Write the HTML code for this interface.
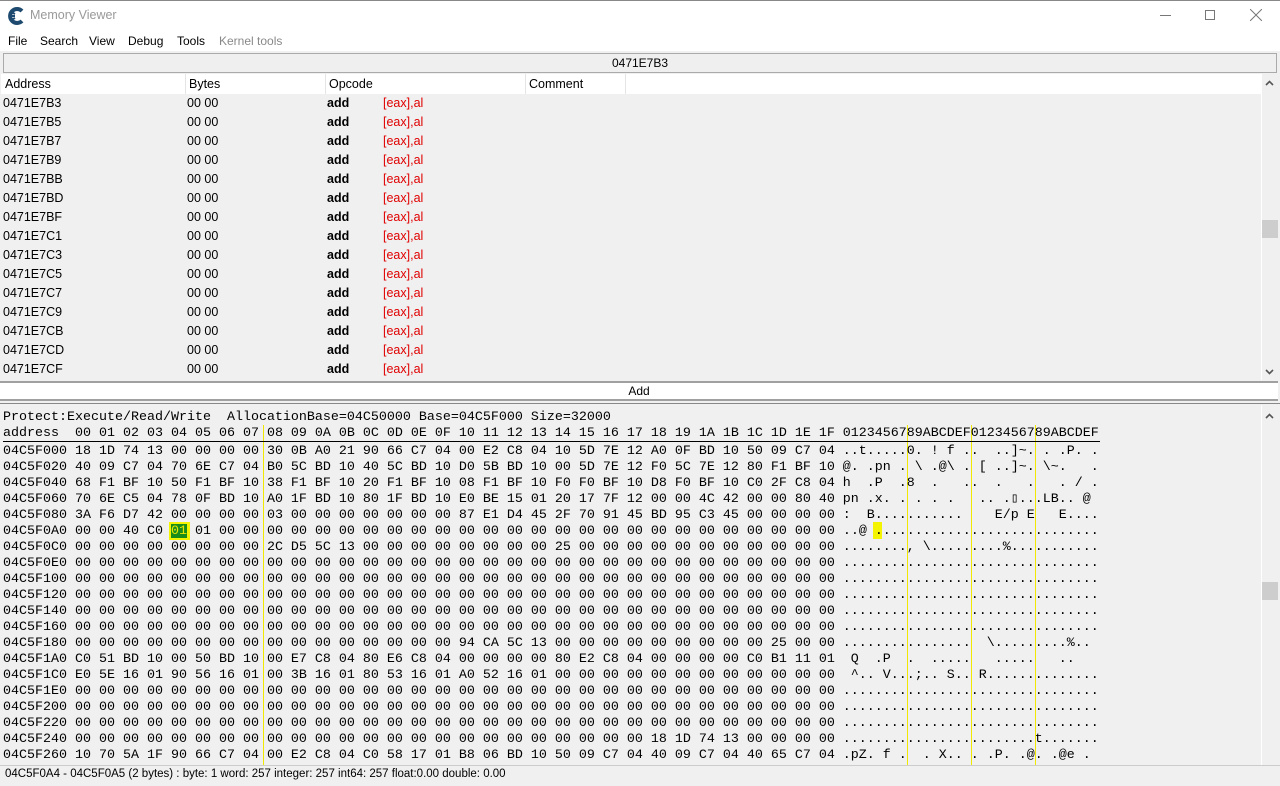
<!DOCTYPE html>
<html><head><style>
*{margin:0;padding:0;box-sizing:border-box}
body{width:1280px;height:786px;background:#f0f0f0;position:relative;overflow:hidden;font-family:"Liberation Sans",sans-serif;font-size:12px;color:#000}
.a{position:absolute}
.m{font-family:"Liberation Mono",monospace;font-size:13.33px;white-space:pre;line-height:16px}
.r{position:absolute;left:0;height:19px;line-height:19px;white-space:pre;font-size:12.5px}
.r span{position:absolute}
.red{color:#e00000}
</style></head><body>
<!-- title bar -->
<div class="a" style="left:0;top:0;width:1280px;height:31px;background:#fff;border-top:1px solid #888"></div>
<svg class="a" style="left:8px;top:7px" width="18" height="18" viewBox="0 0 18 18"><path d="M14 4 A7 7 0 1 0 14 14" stroke="#1d4a6e" stroke-width="4" fill="none"/><path d="M2 9h5M3 5l4 2M3 13l4-2" stroke="#1d4a6e" stroke-width="2"/></svg>
<div class="a" style="left:30px;top:8px;font-size:12.5px;color:#999">Memory Viewer</div>
<div class="a" style="left:1160px;top:15px;width:11px;height:1px;background:#777"></div>
<div class="a" style="left:1205px;top:10px;width:10px;height:10px;border:1px solid #777"></div>
<svg class="a" style="left:1250px;top:9px" width="12" height="12"><path d="M0 0L12 12M12 0L0 12" stroke="#777" stroke-width="1"/></svg>
<!-- menu -->
<div class="a" style="left:0;top:31px;width:1280px;height:20px;background:#fff"></div>
<div class="a" style="left:8px;top:34px">File</div>
<div class="a" style="left:40px;top:34px">Search</div>
<div class="a" style="left:89px;top:34px">View</div>
<div class="a" style="left:128px;top:34px">Debug</div>
<div class="a" style="left:177px;top:34px">Tools</div>
<div class="a" style="left:219px;top:34px;color:#888">Kernel tools</div>
<!-- address bar -->
<div class="a" style="left:3px;top:53px;width:1274px;height:20px;background:#efefef;border:1px solid #aaa;text-align:center;line-height:18px">0471E7B3</div>
<!-- disasm -->
<div class="a" style="left:1px;top:74px;width:1260px;height:20px;background:#fff"></div>
<div class="a" style="left:185px;top:74px;width:1px;height:20px;background:#e5e5e5"></div>
<div class="a" style="left:325px;top:74px;width:1px;height:20px;background:#e5e5e5"></div>
<div class="a" style="left:525px;top:74px;width:1px;height:20px;background:#e5e5e5"></div>
<div class="a" style="left:625px;top:74px;width:1px;height:20px;background:#e5e5e5"></div>
<div class="a" style="left:5px;top:77px;font-size:12.5px">Address</div>
<div class="a" style="left:189px;top:77px;font-size:12.5px">Bytes</div>
<div class="a" style="left:329px;top:77px;font-size:12.5px">Opcode</div>
<div class="a" style="left:529px;top:77px;font-size:12.5px">Comment</div>
<div class="a" style="left:1261px;top:74px;width:17px;height:306px;background:#f0f0f0;border-left:1px solid #fff"></div>
<svg class="a" style="left:1265px;top:80px" width="9" height="6"><path d="M1 5L4.5 1.5L8 5" stroke="#555" stroke-width="1.6" fill="none"/></svg>
<svg class="a" style="left:1265px;top:369px" width="9" height="6"><path d="M1 1L4.5 4.5L8 1" stroke="#555" stroke-width="1.6" fill="none"/></svg>
<div class="a" style="left:1262px;top:220px;width:16px;height:18px;background:#cdcdcd"></div>
<div class="a" style="left:0;top:94px;width:1260px;height:286px">
<div class="r" style="top:0"><span style="left:3px">0471E7B3</span><span style="left:187px">00 00</span><b style="position:absolute;left:327px">add</b><span class="red" style="left:383px">[eax],al</span></div>
<div class="r" style="top:19px"><span style="left:3px">0471E7B5</span><span style="left:187px">00 00</span><b style="position:absolute;left:327px">add</b><span class="red" style="left:383px">[eax],al</span></div>
<div class="r" style="top:38px"><span style="left:3px">0471E7B7</span><span style="left:187px">00 00</span><b style="position:absolute;left:327px">add</b><span class="red" style="left:383px">[eax],al</span></div>
<div class="r" style="top:57px"><span style="left:3px">0471E7B9</span><span style="left:187px">00 00</span><b style="position:absolute;left:327px">add</b><span class="red" style="left:383px">[eax],al</span></div>
<div class="r" style="top:76px"><span style="left:3px">0471E7BB</span><span style="left:187px">00 00</span><b style="position:absolute;left:327px">add</b><span class="red" style="left:383px">[eax],al</span></div>
<div class="r" style="top:95px"><span style="left:3px">0471E7BD</span><span style="left:187px">00 00</span><b style="position:absolute;left:327px">add</b><span class="red" style="left:383px">[eax],al</span></div>
<div class="r" style="top:114px"><span style="left:3px">0471E7BF</span><span style="left:187px">00 00</span><b style="position:absolute;left:327px">add</b><span class="red" style="left:383px">[eax],al</span></div>
<div class="r" style="top:133px"><span style="left:3px">0471E7C1</span><span style="left:187px">00 00</span><b style="position:absolute;left:327px">add</b><span class="red" style="left:383px">[eax],al</span></div>
<div class="r" style="top:152px"><span style="left:3px">0471E7C3</span><span style="left:187px">00 00</span><b style="position:absolute;left:327px">add</b><span class="red" style="left:383px">[eax],al</span></div>
<div class="r" style="top:171px"><span style="left:3px">0471E7C5</span><span style="left:187px">00 00</span><b style="position:absolute;left:327px">add</b><span class="red" style="left:383px">[eax],al</span></div>
<div class="r" style="top:190px"><span style="left:3px">0471E7C7</span><span style="left:187px">00 00</span><b style="position:absolute;left:327px">add</b><span class="red" style="left:383px">[eax],al</span></div>
<div class="r" style="top:209px"><span style="left:3px">0471E7C9</span><span style="left:187px">00 00</span><b style="position:absolute;left:327px">add</b><span class="red" style="left:383px">[eax],al</span></div>
<div class="r" style="top:228px"><span style="left:3px">0471E7CB</span><span style="left:187px">00 00</span><b style="position:absolute;left:327px">add</b><span class="red" style="left:383px">[eax],al</span></div>
<div class="r" style="top:247px"><span style="left:3px">0471E7CD</span><span style="left:187px">00 00</span><b style="position:absolute;left:327px">add</b><span class="red" style="left:383px">[eax],al</span></div>
<div class="r" style="top:266px"><span style="left:3px">0471E7CF</span><span style="left:187px">00 00</span><b style="position:absolute;left:327px">add</b><span class="red" style="left:383px">[eax],al</span></div>
</div>
<!-- Add bar -->
<div class="a" style="left:0;top:381px;width:1278px;height:20px;background:#fff;border-top:2px solid #a0a0a0;border-bottom:2px solid #a0a0a0;text-align:center;line-height:17px">Add</div>
<div class="a" style="left:0;top:403px;width:1280px;height:1px;background:#888"></div>
<!-- hex -->
<div class="a" style="left:0;top:405px;width:1261px;height:361px;background:#f0f0f0"></div>
<div class="a" style="left:1261px;top:405px;width:17px;height:361px;background:#f0f0f0;border-left:1px solid #fff"></div>
<svg class="a" style="left:1265px;top:413px" width="9" height="6"><path d="M1 5L4.5 1.5L8 5" stroke="#555" stroke-width="1.6" fill="none"/></svg>
<div class="a" style="left:1262px;top:582px;width:16px;height:18px;background:#cdcdcd"></div>
<div class="a" style="left:263px;top:425px;width:1px;height:340px;background:#f0e800"></div>
<div class="a" style="left:907px;top:425px;width:1px;height:340px;background:#f0e800"></div>
<div class="a" style="left:971px;top:425px;width:1px;height:340px;background:#f0e800"></div>
<div class="a" style="left:1035px;top:425px;width:1px;height:340px;background:#f0e800"></div>
<div class="a" style="left:3px;top:441px;width:1097px;height:1px;background:#000"></div>
<div class="a" style="left:169px;top:522px;width:21px;height:18px;background:#f4f400"></div>
<div class="a" style="left:171px;top:524px;width:16px;height:14px;background:#1a8c1a"></div>
<div class="a" style="left:873px;top:522px;width:9px;height:17px;background:#f4f400"></div>
<div class="a m" style="left:3px;top:410px">Protect:Execute/Read/Write  AllocationBase=04C50000 Base=04C5F000 Size=32000
address  00 01 02 03 04 05 06 07 08 09 0A 0B 0C 0D 0E 0F 10 11 12 13 14 15 16 17 18 19 1A 1B 1C 1D 1E 1F 0123456789ABCDEF0123456789ABCDEF</div>
<div class="a m" style="left:3px;top:444px">04C5F000 18 1D 74 13 00 00 00 00 30 0B A0 21 90 66 C7 04 00 E2 C8 04 10 5D 7E 12 A0 0F BD 10 50 09 C7 04 ..t.....0. ! f ..  ..]~. . .P. .
04C5F020 40 09 C7 04 70 6E C7 04 B0 5C BD 10 40 5C BD 10 D0 5B BD 10 00 5D 7E 12 F0 5C 7E 12 80 F1 BF 10 @. .pn . \ .@\ . [ ..]~. \~.   .
04C5F040 68 F1 BF 10 50 F1 BF 10 38 F1 BF 10 20 F1 BF 10 08 F1 BF 10 F0 F0 BF 10 D8 F0 BF 10 C0 2F C8 04 h  .P  .8  .   ..  .   .   . / .
04C5F060 70 6E C5 04 78 0F BD 10 A0 1F BD 10 80 1F BD 10 E0 BE 15 01 20 17 7F 12 00 00 4C 42 00 00 80 40 pn .x. . . . .   .. .▯...LB.. @
04C5F080 3A F6 D7 42 00 00 00 00 03 00 00 00 00 00 00 00 87 E1 D4 45 2F 70 91 45 BD 95 C3 45 00 00 00 00 :  B...........    E/p E   E....
04C5F0A0 00 00 40 C0 <span style="color:#e8e800">01</span> 01 00 00 00 00 00 00 00 00 00 00 00 00 00 00 00 00 00 00 00 00 00 00 00 00 00 00 ..@ ............................
04C5F0C0 00 00 00 00 00 00 00 00 2C D5 5C 13 00 00 00 00 00 00 00 00 25 00 00 00 00 00 00 00 00 00 00 00 ........, \.........%...........
04C5F0E0 00 00 00 00 00 00 00 00 00 00 00 00 00 00 00 00 00 00 00 00 00 00 00 00 00 00 00 00 00 00 00 00 ................................
04C5F100 00 00 00 00 00 00 00 00 00 00 00 00 00 00 00 00 00 00 00 00 00 00 00 00 00 00 00 00 00 00 00 00 ................................
04C5F120 00 00 00 00 00 00 00 00 00 00 00 00 00 00 00 00 00 00 00 00 00 00 00 00 00 00 00 00 00 00 00 00 ................................
04C5F140 00 00 00 00 00 00 00 00 00 00 00 00 00 00 00 00 00 00 00 00 00 00 00 00 00 00 00 00 00 00 00 00 ................................
04C5F160 00 00 00 00 00 00 00 00 00 00 00 00 00 00 00 00 00 00 00 00 00 00 00 00 00 00 00 00 00 00 00 00 ................................
04C5F180 00 00 00 00 00 00 00 00 00 00 00 00 00 00 00 00 94 CA 5C 13 00 00 00 00 00 00 00 00 00 25 00 00 ................  \.........%..
04C5F1A0 C0 51 BD 10 00 50 BD 10 00 E7 C8 04 80 E6 C8 04 00 00 00 00 80 E2 C8 04 00 00 00 00 C0 B1 11 01  Q  .P  .  .....   .....   ..
04C5F1C0 E0 5E 16 01 90 56 16 01 00 3B 16 01 80 53 16 01 A0 52 16 01 00 00 00 00 00 00 00 00 00 00 00 00  ^.. V...;.. S.. R..............
04C5F1E0 00 00 00 00 00 00 00 00 00 00 00 00 00 00 00 00 00 00 00 00 00 00 00 00 00 00 00 00 00 00 00 00 ................................
04C5F200 00 00 00 00 00 00 00 00 00 00 00 00 00 00 00 00 00 00 00 00 00 00 00 00 00 00 00 00 00 00 00 00 ................................
04C5F220 00 00 00 00 00 00 00 00 00 00 00 00 00 00 00 00 00 00 00 00 00 00 00 00 00 00 00 00 00 00 00 00 ................................
04C5F240 00 00 00 00 00 00 00 00 00 00 00 00 00 00 00 00 00 00 00 00 00 00 00 00 18 1D 74 13 00 00 00 00 ........................t.......
04C5F260 10 70 5A 1F 90 66 C7 04 00 E2 C8 04 C0 58 17 01 B8 06 BD 10 50 09 C7 04 40 09 C7 04 40 65 C7 04 .pZ. f .  . X.. . .P. .@. .@e .</div>
<div class="a" style="left:0;top:765px;width:1280px;height:1px;background:#ccc"></div>
<div class="a" style="left:5px;top:768px;font-size:11.5px">04C5F0A4 - 04C5F0A5 (2 bytes) : byte: 1 word: 257 integer: 257 int64: 257 float:0.00 double: 0.00</div>
</body></html>
